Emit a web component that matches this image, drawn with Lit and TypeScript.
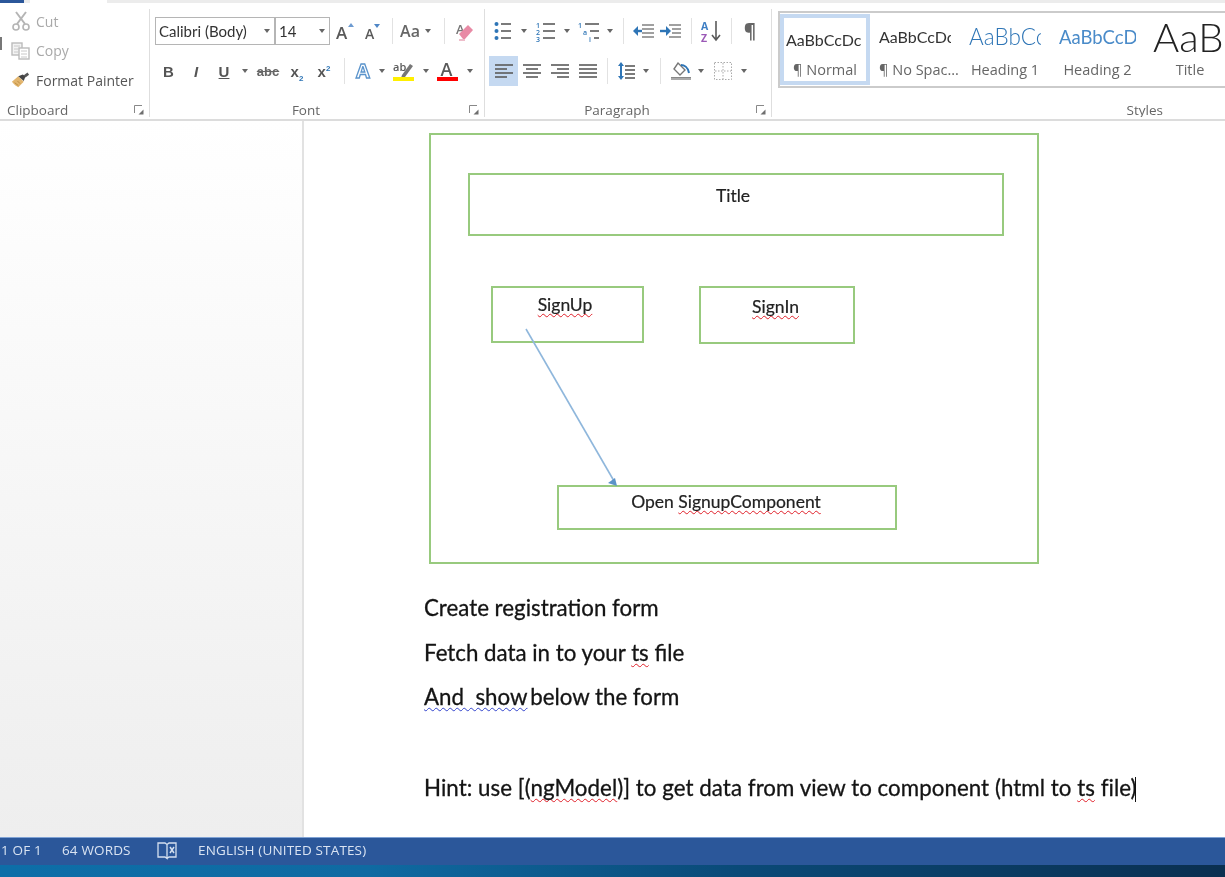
import { LitElement, css, html, svg } from "lit";
import { customElement } from "lit/decorators.js";

const ico = (w: number, h: number, body: unknown) =>
  html`<svg width=${w} height=${h} viewBox="0 0 ${w} ${h}">${body}</svg>`;

const GREY = "#5a5a5a";
const BLUE = "#2e75b6";

const caret = html`<span class="caret"></span>`;

const lines = (xs: [number, number, number][], color = GREY) =>
  xs.map(([x1, x2, y]) => svg`<path d="M${x1} ${y}H${x2}" stroke=${color} stroke-width="1.6"/>`);

const icons = {
  cut: ico(20, 20, svg`
    <path d="M5 1l9 12M15 1L6 13" stroke="#b5b5b5" stroke-width="2" fill="none"/>
    <circle cx="5" cy="16" r="3" stroke="#b5b5b5" stroke-width="1.6" fill="none"/>
    <circle cx="15" cy="16" r="3" stroke="#b5b5b5" stroke-width="1.6" fill="none"/>`),
  copy: ico(20, 18, svg`
    <rect x="1" y="1" width="10" height="12" fill="#f3f3f3" stroke="#bbb" stroke-width="1.4"/>
    <rect x="8" y="6" width="10" height="11" fill="#fff" stroke="#bbb" stroke-width="1.4"/>
    <path d="M3 4h6M3 7h4M3 10h4M10 9h6M10 12h6M10 15h6" stroke="#c8c8c8" stroke-width="1"/>`),
  painter: ico(22, 18, svg`
    <path d="M1 11l7-6 6 6-6 6c-2-1-5-3-7-6z" fill="#e2b56e"/>
    <path d="M8 5l5-2 3 2-2 5z" fill="#444"/>
    <path d="M15 5l4-3" stroke="#555" stroke-width="3"/>
    <path d="M4 12l4 3M7 10l3 3" stroke="#b98a3e" stroke-width="1"/>`),
  launcher: ico(10, 10, svg`
    <path d="M.5 8V.5H8" stroke="#888" fill="none"/>
    <path d="M9.5 9.500H4.500L9.500 4.500z" fill="#6f6f6f"/>`),
  growFont: ico(18, 18, svg`
    <text x="0" y="17" class="svgt" font-size="17" fill=${GREY}>A</text>
    <path d="M12 5l3-4 3 4z" fill="#6d9bd1"/>`),
  shrinkFont: ico(18, 18, svg`
    <text x="1" y="17" class="svgt" font-size="14" fill=${GREY}>A</text>
    <path d="M10 2l3 4 3-4z" fill="#4f86c6"/>`),
  eraser: ico(20, 20, svg`
    <text x="2" y="13" class="svgt" font-size="13" fill="#777">A</text>
    <path d="M5 13l9-9 5 5-8 9H9z" fill="#e88aa5"/>
    <path d="M5 19h6" stroke="#e9a7b9" stroke-width="1.5"/>`),
  textEffect: ico(18, 20, svg`
    <text x="1" y="17" class="svgo" font-size="20" fill="#fff" stroke="#5b94cc" stroke-width="1.3">A</text>`),
  highlight: ico(22, 20, svg`
    <text x="0" y="10" class="svgt" font-size="11" fill=${GREY}>ab</text>
    <path d="M9 14l8-11 3 2-8 11-4 1z" fill="#777"/>
    <rect x="0" y="16" width="21" height="4" fill="#ffef00"/>`),
  fontColor: ico(22, 20, svg`
    <text x="3.500" y="15" class="svgt" font-size="18" fill=${GREY}>A</text>
    <rect x="0" y="16" width="21" height="4" fill="#f00"/>`),
  bullets: ico(18, 20, svg`
    <circle cx="2.500" cy="3" r="2" fill=${BLUE}/><circle cx="2.500" cy="10" r="2" fill=${BLUE}/><circle cx="2.500" cy="17" r="2" fill=${BLUE}/>
    ${lines([[7, 17, 3], [7, 17, 10], [7, 17, 17]])}`),
  numbering: ico(20, 21, svg`
    <text x="0" y="6.500" class="svgt" font-size="7" fill=${BLUE}>1</text>
    <text x="0" y="13.500" class="svgt" font-size="7" fill=${BLUE}>2</text>
    <text x="0" y="20.500" class="svgt" font-size="7" fill=${BLUE}>3</text>
    ${lines([[7, 19, 3], [7, 19, 10], [7, 19, 17]])}`),
  multilevel: ico(22, 21, svg`
    <text x="0" y="6.500" class="svgt" font-size="7" fill=${BLUE}>1</text>
    <text x="5" y="13.500" class="svgt" font-size="7" fill=${BLUE}>a</text>
    <text x="11" y="20.500" class="svgt" font-size="7" fill=${BLUE}>i</text>
    ${lines([[7, 21, 3], [12, 21, 10], [16, 21, 17]])}`),
  outdent: ico(22, 16, svg`
    ${lines([[9, 21, 2], [9, 21, 6], [9, 21, 10], [9, 21, 14]], "#888")}
    <path d="M9 8H3" stroke=${BLUE} stroke-width="2.4"/><path d="M0 8l5-5v10z" fill=${BLUE}/>`),
  indent: ico(22, 16, svg`
    ${lines([[9, 21, 2], [12, 21, 6], [12, 21, 10], [9, 21, 14]], "#888")}
    <path d="M0 8h7" stroke=${BLUE} stroke-width="2.4"/><path d="M11 8L6 3v10z" fill=${BLUE}/>`),
  sort: ico(20, 23, svg`
    <text x="0" y="10" class="svgo" font-size="10.500" fill="#3f7fc4">A</text>
    <text x="0" y="22" class="svgo" font-size="10.500" fill="#9b59b6">Z</text>
    <path d="M15 1v19M11 15l4 5 4-5" stroke=${GREY} stroke-width="1.6" fill="none"/>`),
  pilcrow: html`<span class="pilcrow">¶</span>`,
  alignLeft: ico(20, 16, lines([[1, 19, 2], [1, 13, 6], [1, 19, 10], [1, 13, 14]])),
  alignCenter: ico(20, 16, lines([[1, 19, 2], [4, 16, 6], [1, 19, 10], [4, 16, 14]])),
  alignRight: ico(20, 16, lines([[1, 19, 2], [7, 19, 6], [1, 19, 10], [7, 19, 14]])),
  justify: ico(20, 16, lines([[1, 19, 2], [1, 19, 6], [1, 19, 10], [1, 19, 14]])),
  lineSpacing: ico(18, 20, svg`
    ${lines([[7, 17, 5], [7, 17, 9], [7, 17, 13], [7, 17, 17]])}
    <path d="M3 4v12" stroke=${BLUE} stroke-width="2"/>
    <path d="M0 5l3-4 3 4zM0 15l3 4 3-4z" fill=${BLUE}/>`),
  shading: ico(22, 20, svg`
    <path d="M8 2l7 7-5 5-6-6z" fill="#fff" stroke="#777" stroke-width="1.4"/>
    <path d="M11 4c3 0 7 2 8 8" stroke=${BLUE} stroke-width="2" fill="none"/>
    <rect x="1" y="17" width="20" height="2" fill="#aaa"/><path d="M1 16.500h20" stroke="#888"/>`),
  borders: ico(18, 18, svg`
    <rect x=".5" y=".5" width="17" height="17" fill="none" stroke="#aaa" stroke-dasharray="1.5 1.5"/>
    <path d="M9 1v16M1 9h16" stroke="#aaa" stroke-dasharray="1.5 1.5"/>`),
  book: ico(20, 20, svg`
    <path d="M1 3h7l2 1.500v14L8 17H1zM10 4.500L12 3h7v14h-7l-2 1.500" fill="none" stroke="#d5e0f0" stroke-width="1.3"/>
    <path d="M13 7l4 6M17 7l-4 6" stroke="#d5e0f0" stroke-width="1.500"/>`),
};

type Cell = [number, unknown, string?];
const sep = (w: number): Cell => [w, html`<i class="vsep"></i>`];
const car = (w: number): Cell => [w, caret];
const t = (text: string, cls: string) => html`<span class=${cls}>${text}</span>`;

const fontRow1: Cell[] = [
  [28, icons.growFont], [28, icons.shrinkFont], sep(10),
  [26, t("Aa", "aa")], car(10), sep(22), [18, icons.eraser],
];
const fontRow2: Cell[] = [
  [27, t("B", "fmt b")], [28, t("I", "fmt it")], [28, t("U", "fmt un")], car(14),
  [32, html`<span class="abc">abc</span>`],
  [26, html`<span class="fmt b">x<sub>2</sub></span>`],
  [28, html`<span class="fmt b">x<sup>2</sup></span>`],
  sep(12), [27, icons.textEffect], car(10), [34, icons.highlight], car(10), [34, icons.fontColor], car(10),
];
const paraRow1: Cell[] = [
  [28, icons.bullets], car(14), [30, icons.numbering], car(12), [32, icons.multilevel], car(10),
  sep(16), [26, icons.outdent], [28, icons.indent], sep(12), [28, icons.sort], sep(12), [26, icons.pilcrow],
];
const paraRow2: Cell[] = [
  [29, icons.alignLeft, "on"], [27, icons.alignCenter], [29, icons.alignRight], [27, icons.justify],
  sep(12), [28, icons.lineSpacing], car(9), sep(20), [21, icons.shading], car(20), [24, icons.borders], car(18),
];

const gallery = [
  { preview: "AaBbCcDc", label: "¶ Normal", cls: "sNormal", w: 90, on: true },
  { preview: "AaBbCcDc", label: "¶ No Spac...", cls: "sNormal", w: 90 },
  { preview: "AaBbCc", label: "Heading 1", cls: "sH1", w: 90 },
  { preview: "AaBbCcD", label: "Heading 2", cls: "sH2", w: 95 },
  { preview: "AaB", label: "Title", cls: "sTitle", w: 90 },
];

@customElement("app-root")
export class AppRoot extends LitElement {
  private row(cells: Cell[]) {
    return html`<div class="row">
      ${cells.map(
        ([w, c, cls]) => html`<span class="cell ${cls ?? ""}" style="width:${w}px">${c}</span>`
      )}
    </div>`;
  }

  render() {
    return html`
      <div class="strip">
        <span class="strip-blue"></span><span class="strip-tab"></span>
      </div>
      <div class="ribbon">
        <section class="group clipboard">
          <div class="clip-list">
            <div class="clip off">${icons.cut}<span>Cut</span></div>
            <div class="clip off">${icons.copy}<span>Copy</span></div>
            <div class="clip">${icons.painter}<span>Format Painter</span></div>
          </div>
          <footer><span>Clipboard</span>${icons.launcher}</footer>
        </section>
        <section class="group font">
          <div class="rows">
            <div class="row">
              <span class="combo name">Calibri (Body)${caret}</span>
              <span class="combo size">14${caret}</span>
              ${fontRow1.map(
                ([w, c]) => html`<span class="cell" style="width:${w}px">${c}</span>`
              )}
            </div>
            ${this.row(fontRow2)}
          </div>
          <footer class="center"><span>Font</span>${icons.launcher}</footer>
        </section>
        <section class="group para">
          <div class="rows">${this.row(paraRow1)}${this.row(paraRow2)}</div>
          <footer class="center"><span>Paragraph</span>${icons.launcher}</footer>
        </section>
        <section class="group styles">
          <div class="gallery">
            ${gallery.map(
              (g) => html`<div class="style ${g.on ? "on" : ""}" style="width:${g.w}px">
                <div class="preview ${g.cls}">${g.preview}</div>
                <div class="slabel">${g.label}</div>
              </div>`
            )}
          </div>
          <footer class="styles-foot"><span>Styles</span></footer>
        </section>
      </div>

      <main class="body">
        <aside class="nav"></aside>
        <div class="doc">
          <div class="canvas">
            <div class="box outer"></div>
            <div class="box title"><span>Title</span></div>
            <div class="box signup"><span class="sp">SignUp</span></div>
            <div class="box signin"><span class="sp">SignIn</span></div>
            <div class="box open"><span>Open <span class="sp">SignupComponent</span></span></div>
            <svg class="arrow" width="100" height="165" viewBox="0 0 100 165">
              <path d="M2 2L90 154" stroke="#8fb7dc" stroke-width="1.600"/>
              <path d="M93 159l-9-3 7-5z" fill="#5b93c8"/>
            </svg>
          </div>
          <p>Create registration form</p>
          <p>Fetch data in to your <span class="sp">ts</span> file</p>
          <p><span class="gr">And  show</span><span class="tight"> below the form</span></p>
          <p class="blank">&nbsp;</p>
          <p class="hint">Hint: use [(<span class="sp">ngModel</span>)] to get data from view to component (html to <span class="sp">ts</span> file)<i class="cursor"></i></p>
        </div>
      </main>

      <footer class="status">
        <span class="s1">1 OF 1</span>
        <span class="s2">64 WORDS</span>
        <span class="s3">${icons.book}</span>
        <span>ENGLISH (UNITED STATES)</span>
      </footer>
      <div class="desktop"></div>
    `;
  }

  static styles = css`
    :host {
      display: block;
      width: 1225px;
      height: 877px;
      overflow: hidden;
      background: #fff;
      font-family: "Open Sans", "Liberation Sans", sans-serif;
      filter: blur(0.45px);
    }

    svg { overflow: visible; flex: none; }
    .svgt { font-family: "Open Sans", sans-serif; font-weight: 600; }
    .svgo { font-family: "Open Sans", sans-serif; font-weight: 700; }

    .strip {
      display: flex;
      height: 3px;
      background: #ececec;
    }
    .strip-blue { width: 24px; background: #2b579a; }
    .strip-tab { width: 77px; margin-left: 6px; background: #fff; }

    .ribbon {
      display: flex;
      height: 116px;
      background: #fff;
      border-bottom: 2px solid #dcdcdc;
    }
    .group {
      position: relative;
      display: flex;
      flex: none;
      flex-direction: column;
      height: 108px;
      margin-top: 6px;
      box-sizing: border-box;
      border-right: 1px solid #dedede;
    }
    .clipboard { width: 150px; padding-left: 11px; }
    /* edge of the paste button, cut off by the crop */
    .clipboard::before {
      content: "";
      position: absolute;
      left: 0;
      top: 28px;
      width: 2px;
      height: 13px;
      background: #777;
    }
    .font { width: 335px; padding-left: 5px; }
    .para { width: 287px; padding-left: 4px; }
    .styles { width: 453px; border-right: 0; padding-left: 6px; overflow: hidden; }

    footer {
      display: flex;
      align-items: center;
    }
    .group footer {
      position: absolute;
      left: 0;
      right: 5px;
      top: 92px;
      height: 18px;
      font-size: 13.500px;
      color: #666;
      justify-content: space-between;
    }
    .clipboard footer { padding-left: 7px; }
    .group footer.center { justify-content: center; padding-right: 17px; }
    .group footer.center svg { position: absolute; right: 0; top: 4px; }
    .group footer.styles-foot { justify-content: flex-end; right: 62px; }

    .clip-list { display: flex; flex-direction: column; padding-top: 2px; gap: 9.500px; }
    .clip {
      display: flex;
      align-items: center;
      gap: 5px;
      height: 20px;
      font-size: 14px;
      color: #555;
    }
    .clip svg { width: 20px; }
    .clip.off { color: #a9a9a9; }

    .rows { display: flex; flex-direction: column; gap: 11px; padding-top: 8px; }
    .row { display: flex; align-items: center; height: 30px; }
    .row:first-child { height: 28px; }
    .cell { display: flex; align-items: center; justify-content: center; height: 30px; flex: none; }
    .cell.on { background: #c5d9f1; }
    .vsep { display: block; width: 1px; height: 26px; background: #e2e2e2; }

    .caret {
      display: inline-block;
      width: 0;
      height: 0;
      border-left: 3.500px solid transparent;
      border-right: 3.500px solid transparent;
      border-top: 4px solid #666;
    }

    .combo {
      position: relative;
      display: flex;
      align-items: center;
      justify-content: space-between;
      box-sizing: border-box;
      height: 28px;
      padding: 0 4px 0 3px;
      border: 1.500px solid #b5b5b5;
      font-family: Lato, sans-serif;
      font-size: 15px;
      color: #333;
      background: #fff;
      flex: none;
    }
    .name { width: 119px; border-right: 0; }
    .size { width: 56px; margin-right: 1px; border-left-width: 2px; }

    .aa { font-size: 16px; font-weight: 600; color: #666; }
    .fmt { font-family: "Liberation Sans", sans-serif; font-size: 15px; color: #555; }
    .b { font-weight: 700; }
    .it { font-style: italic; font-weight: 700; }
    .un { font-weight: 700; text-decoration: underline; }
    .fmt sub, .fmt sup { font-size: 8px; color: #2e75b6; line-height: 0; }
    .abc {
      font-family: "Liberation Sans", sans-serif;
      font-size: 13px;
      font-weight: 700;
      color: #666;
      text-decoration: line-through;
    }
    .pilcrow { font-size: 19px; font-weight: 700; color: #666; line-height: 1; }

    .gallery {
      display: flex;
      box-sizing: border-box;
      width: 460px;
      height: 77px;
      margin-top: 2px;
      border: 2px solid #cbcbcb;
      border-right: 0;
      overflow: hidden;
    }
    .style {
      box-sizing: border-box;
      flex: none;
      height: 73px;
      padding: 0 9px;
      text-align: center;
      overflow: hidden;
    }
    .style.on {
      border: 4px solid #c5d9f1;
      padding: 0 2px;
      height: 71px;
      margin-top: 1px;
    }
    .preview {
      display: flex;
      align-items: center;
      height: 47px;
      overflow: hidden;
      white-space: nowrap;
      font-family: Lato, sans-serif;
    }
    .on .preview { height: 42px; }
    .sNormal { font-size: 16px; color: #333; }
    .sH1 { font-size: 22.500px; font-weight: 300; color: #2e75b6; }
    .sH2 { font-size: 18.500px; color: #4a8bc9; }
    .sTitle { font-size: 40px; font-weight: 300; color: #222; width: 69px; }
    .style:last-child { padding: 0 0 0 8px; }
    .slabel { font-size: 14.500px; color: #666; white-space: nowrap; }
    .style:last-child .slabel { margin-left: -8px; }

    .body {
      display: flex;
      height: 716px;
      font-family: Lato, sans-serif;
    }
    .nav {
      box-sizing: border-box;
      width: 304px;
      flex: none;
      border-right: 2px solid #e2e2e2;
      background: linear-gradient(#fff, #eeeeee);
    }
    .doc {
      flex: 1;
      padding-left: 120px;
      color: #141414;
    }

    /* free drawing canvas, shapes sit at their drawn positions */
    .canvas { position: relative; height: 465px; margin-left: -120px; font-size: 17.500px; color: #222; }
    .box {
      position: absolute;
      box-sizing: border-box;
      border: 2px solid #98ca7e;
      display: flex;
      justify-content: center;
      -webkit-text-stroke: 0.2px;
    }
    .outer { left: 125px; top: 12px; width: 610px; height: 431px; }
    .title { left: 164px; top: 52px; width: 536px; height: 63px; padding: 10px 6px 0 0; }
    .signup { left: 187px; top: 165px; width: 153px; height: 57px; padding: 6px 5px 0 0; }
    .signin { left: 395px; top: 165px; width: 156px; height: 58px; padding: 8px 3px 0 0; }
    .open { left: 253px; top: 364px; width: 340px; height: 45px; padding: 4px 2px 0 0; }
    .arrow { position: absolute; left: 220px; top: 206px; }

    p {
      margin: 0;
      height: 44.500px;
      line-height: 44.500px;
      font-size: 22.300px;
      white-space: pre;
      -webkit-text-stroke: 0.3px;
    }
    .blank { height: 46px; }
    .hint { letter-spacing: 0.05px; }
    .tight { margin-left: -3px; }
    .sp, .gr {
      text-decoration: underline wavy 1px;
      text-underline-offset: 2px;
      text-decoration-skip-ink: none;
    }
    .sp { text-decoration-color: #e0202a; }
    .gr { text-decoration-color: #3344cc; }
    .cursor {
      display: inline-block;
      width: 1.500px;
      height: 25px;
      margin-left: -2px;
      vertical-align: -6px;
      background: #111;
    }

    .status {
      display: flex;
      align-items: center;
      height: 28px;
      box-sizing: border-box;
      border-top: 1px solid #7fa2d4;
      background: #2b579a;
      color: #d9e3f2;
      font-size: 13.500px;
      letter-spacing: 0.15px;
      padding: 0 0 3px 1px;
    }
    .s1 { width: 61px; }
    .s2 { width: 95px; }
    .s3 { width: 41px; display: flex; }
    .desktop {
      height: 12px;
      background: linear-gradient(90deg, #0d6ea8 0, #0f6aa2 30%, #0a4a78 60%, #0a2f50 100%);
    }
  `;
}

declare global {
  interface HTMLElementTagNameMap {
    "app-root": AppRoot;
  }
}
